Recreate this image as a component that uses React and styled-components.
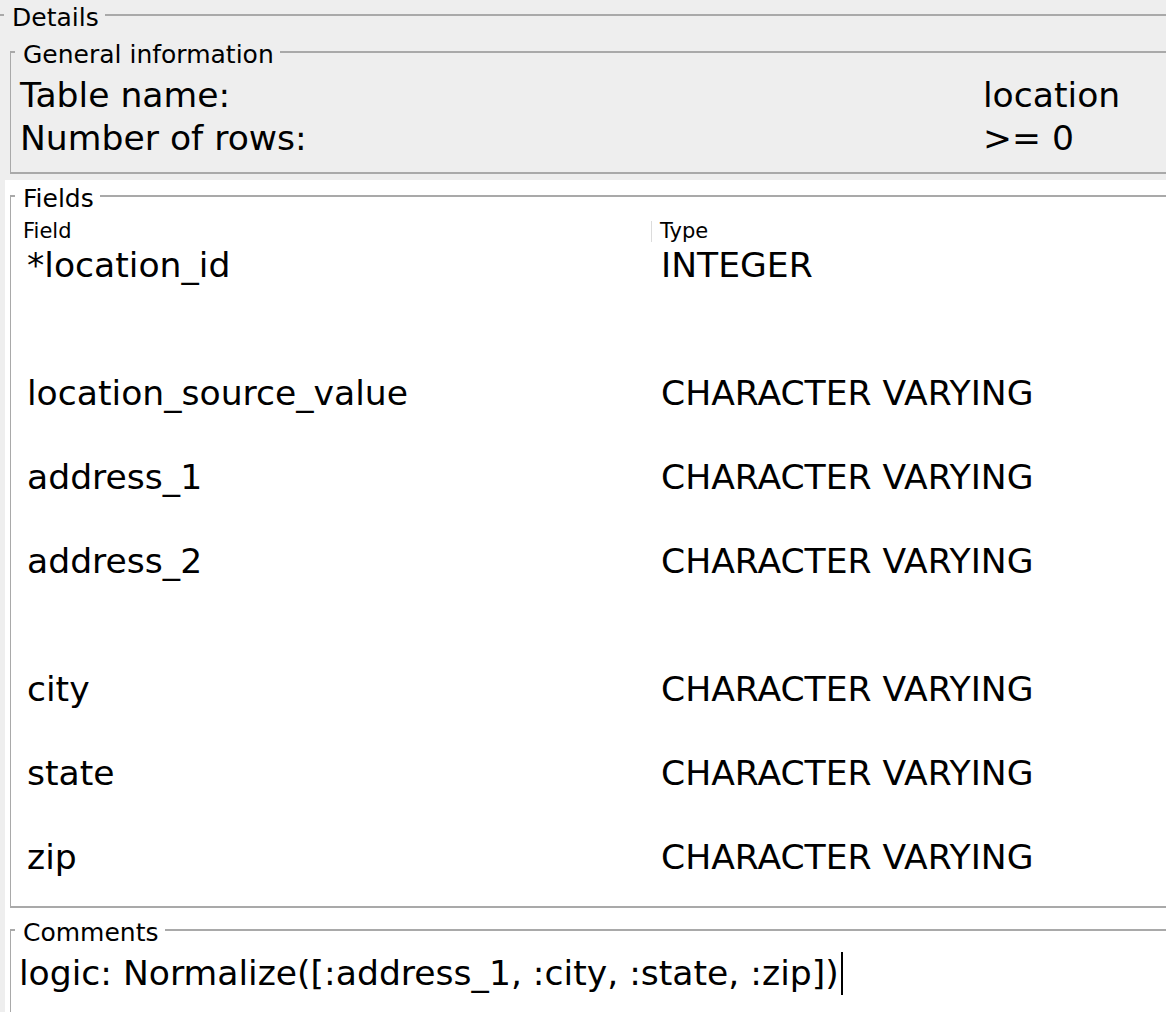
import React from 'react';
import styled, { createGlobalStyle } from 'styled-components';

const GlobalStyle = createGlobalStyle`
  html, body {
    margin: 0;
    padding: 0;
    background: #eeeeee;
    overflow: hidden;
  }
  body {
    font-family: "DejaVu Sans", "Liberation Sans", sans-serif;
    color: #000;
  }
`;

const Page = styled.div`
  width: 1166px;
  height: 1012px;
  overflow: hidden;
`;

// titled border, like a swing TitledBorder
const Group = styled.fieldset`
  margin: 0;
  padding: 0;
  min-width: 0;
  border-style: solid;
  border-color: #a9a9a9;
  border-width: 2px 0 2px 1px;
`;

const DetailsGroup = styled(Group)`
  margin: 1px -40px 0 -1px;
  border-bottom: none;
`;

const Title = styled.legend`
  margin-left: 4px;
  padding: 7px 6px 0 8px;
  font-size: 25px;
  line-height: 20px;
`;

const DetailsBody = styled.div`
  padding: 5px 0 0 5px;
`;

const Panel = styled.div`
  background: ${(p) => (p.$white ? '#ffffff' : 'transparent')};
  padding: ${(p) => p.$pad};
`;

const InfoGrid = styled.div`
  display: grid;
  grid-template-columns: 963px 1fr;
  padding: 9px 0 12px 9px;
  font-size: 34.6px;
  line-height: 43px;
`;

const FieldsBody = styled.div`
  padding: 12px 0 0 3px;
`;

const HeadRow = styled.div`
  display: grid;
  grid-template-columns: 637px 1fr;
  height: 24px;
`;

const HeadCell = styled.div`
  font-size: 21px;
  line-height: 21px;
  height: 21px;
  padding-left: ${(p) => (p.$sep ? '8px' : '9px')};
  border-left: ${(p) => (p.$sep ? '1px solid #dcdcdc' : 'none')};
`;

const Rows = styled.div`
  height: 661px;
  overflow: hidden;
`;

const Row = styled.div`
  display: grid;
  grid-template-columns: 637px 1fr;
  height: ${(p) => (p.$tall ? 128 : 84)}px;
  font-size: 34.6px;
  line-height: 40px;
`;

const Cell = styled.div`
  padding-left: ${(p) => (p.$type ? '10px' : '13px')};
  white-space: nowrap;
`;

const CommentsBody = styled.div`
  padding: 10px 0 0 8px;
  min-height: 120px;
`;

const CommentText = styled.div`
  font-size: 34.6px;
  line-height: 40px;
  white-space: nowrap;
`;

const Caret = styled.span`
  display: inline-block;
  vertical-align: top;
  width: 0;
  height: 43px;
  margin: -1px 0 -2px 2px;
  border-left: 2px solid #000;
`;

const fields = [
  { name: '*location_id', type: 'INTEGER', tall: true },
  { name: 'location_source_value', type: 'CHARACTER VARYING' },
  { name: 'address_1', type: 'CHARACTER VARYING' },
  { name: 'address_2', type: 'CHARACTER VARYING', tall: true },
  { name: 'city', type: 'CHARACTER VARYING' },
  { name: 'state', type: 'CHARACTER VARYING' },
  { name: 'zip', type: 'CHARACTER VARYING' },
];

export default function App() {
  return (
    <Page>
      <GlobalStyle />
      <DetailsGroup>
        <Title>Details</Title>
        <DetailsBody>
          <Panel $pad="5px 0 6px 5px">
            <Group>
              <Title>General information</Title>
              <InfoGrid>
                <div>Table name:</div>
                <div>location</div>
                <div>Number of rows:</div>
                <div>&gt;= 0</div>
              </InfoGrid>
            </Group>
          </Panel>

          <Panel $white $pad="2px 0 5px 5px">
            <Group>
              <Title>Fields</Title>
              <FieldsBody>
                <HeadRow>
                  <HeadCell>Field</HeadCell>
                  <HeadCell $sep>Type</HeadCell>
                </HeadRow>
                <Rows>
                  {fields.map((f) => (
                    <Row key={f.name} $tall={f.tall}>
                      <Cell>{f.name}</Cell>
                      <Cell $type>{f.type}</Cell>
                    </Row>
                  ))}
                </Rows>
              </FieldsBody>
            </Group>
          </Panel>

          <Panel $white $pad="3px 0 0 5px">
            <Group>
              <Title>Comments</Title>
              <CommentsBody>
                <CommentText>
                  logic: Normalize([:address_1, :city, :state, :zip])
                  <Caret />
                </CommentText>
              </CommentsBody>
            </Group>
          </Panel>
        </DetailsBody>
      </DetailsGroup>
    </Page>
  );
}
